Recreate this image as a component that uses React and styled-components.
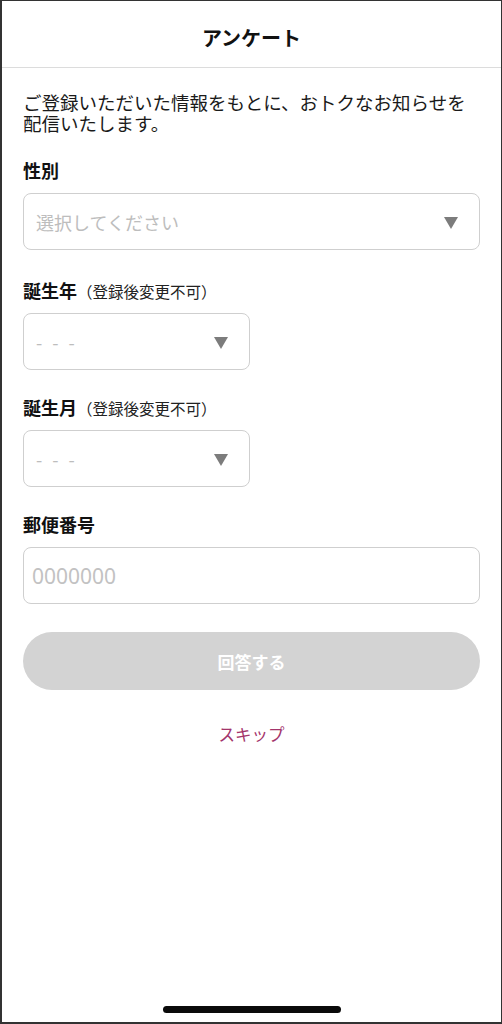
import React from 'react';
import styled, { createGlobalStyle } from 'styled-components';

const GlobalStyle = createGlobalStyle`
    * {
        box-sizing: border-box;
    }
    body {
        margin: 0;
        background: #ffffff;
        font-family: 'Noto Sans CJK JP', 'Noto Sans', sans-serif;
        color: #111111;
    }
`;

const birthFields = [
    { label: '誕生年', note: '（登録後変更不可）', top: 29 },
    { label: '誕生月', note: '（登録後変更不可）', top: 26 },
];

const App = () => {
    return (
        <Page>
            <GlobalStyle />
            <Header>
                <Title>アンケート</Title>
            </Header>
            <Content>
                <Intro>
                    ご登録いただいた情報をもとに、おトクなお知らせを
                    <br />
                    配信いたします。
                </Intro>

                <Field $top={25}>
                    <Label>性別</Label>
                    <Select>
                        <Placeholder>選択してください</Placeholder>
                        <Arrow />
                    </Select>
                </Field>

                {birthFields.map((f) => (
                    <Field $top={f.top} key={f.label}>
                        <Label>
                            {f.label}
                            <Note>{f.note}</Note>
                        </Label>
                        <Select $half>
                            <Placeholder $dashes>- - -</Placeholder>
                            <Arrow />
                        </Select>
                    </Field>
                ))}

                <Field $top={26}>
                    <Label>郵便番号</Label>
                    <Input placeholder="0000000" />
                </Field>

                <SubmitButton disabled>回答する</SubmitButton>
                <SkipLink>スキップ</SkipLink>
            </Content>
            <Spacer />
            <HomeIndicator />
        </Page>
    );
};

export default App;

const Page = styled.div`
    width: 502px;
    height: 1024px;
    display: flex;
    flex-direction: column;
    border: 1px solid #333333;
    border-left-width: 2px;
    border-bottom-width: 2px;
    background: #ffffff;
`;

const Header = styled.div`
    height: 67px;
    display: flex;
    align-items: center;
    justify-content: center;
    border-bottom: 1px solid #dcdcdc;
    flex-shrink: 0;
`;

const Title = styled.h1`
    margin: 0;
    font-size: 20px;
    font-weight: 700;
    line-height: 24px;
    padding-top: 8px;
    color: #111111;
`;

const Content = styled.div`
    display: flex;
    flex-direction: column;
    padding: 24px 21px 0 21px;
`;

const Intro = styled.p`
    margin: 0;
    font-size: 18.5px;
    line-height: 21px;
    color: #1a1a1a;
`;

const Field = styled.div`
    display: flex;
    flex-direction: column;
    gap: 12px;
    margin-top: ${(p) => p.$top}px;
`;

const Label = styled.div`
    display: flex;
    align-items: baseline;
    height: 22px;
    font-size: 18px;
    font-weight: 700;
    line-height: 22px;
    color: #111111;
`;

const Note = styled.span`
    font-size: 15.5px;
    font-weight: 400;
    line-height: 22px;
    color: #222222;
`;

const Select = styled.div`
    width: ${(p) => (p.$half ? '227px' : '100%')};
    height: 57px;
    border: 1.5px solid #cfcfcf;
    border-radius: 8px;
    display: flex;
    align-items: center;
    justify-content: space-between;
    padding: 0 21px 0 12px;
    background: #ffffff;
`;

const Placeholder = styled.span`
    font-size: 18px;
    color: #bdbdbd;
    line-height: 22px;
    letter-spacing: ${(p) => (p.$dashes ? '3px' : '0')};
`;

const Arrow = styled.span`
    width: 0;
    height: 0;
    border-left: 7px solid transparent;
    border-right: 7px solid transparent;
    border-top: 12px solid #7c7c7c;
    margin-top: 2px;
`;

const Input = styled.input`
    width: 100%;
    height: 57px;
    border: 1.5px solid #cfcfcf;
    border-radius: 8px;
    padding: 0 8px;
    font-family: 'Noto Sans', sans-serif;
    font-size: 21px;
    color: #111111;
    outline: none;
    &::placeholder {
        color: #c2c2c2;
    }
`;

const SubmitButton = styled.button`
    margin-top: 28px;
    width: 100%;
    height: 58px;
    border: none;
    border-radius: 29px;
    background: #d3d3d3;
    color: #ffffff;
    font-family: 'Noto Sans CJK JP', sans-serif;
    font-size: 17px;
    font-weight: 700;
`;

const SkipLink = styled.a`
    margin-top: 33px;
    align-self: center;
    font-size: 16.5px;
    line-height: 22px;
    color: #a3346b;
    cursor: pointer;
`;

const Spacer = styled.div`
    flex: 1;
`;

const HomeIndicator = styled.div`
    align-self: center;
    width: 178px;
    height: 7px;
    border-radius: 4px;
    background: #0a0a0a;
    margin-bottom: 9px;
`;
